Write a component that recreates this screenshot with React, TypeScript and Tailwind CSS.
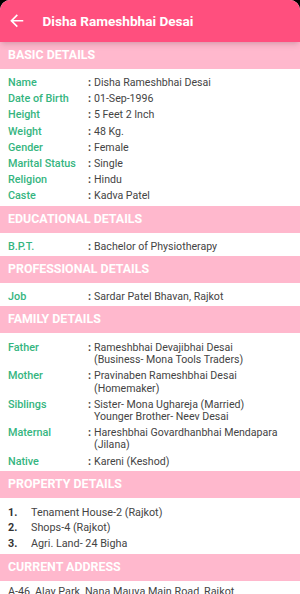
type Row = { label: string; value: string[] };

const basic: Row[] = [
  { label: "Name", value: ["Disha Rameshbhai Desai"] },
  { label: "Date of Birth", value: ["01-Sep-1996"] },
  { label: "Height", value: ["5 Feet 2 Inch"] },
  { label: "Weight", value: ["48 Kg."] },
  { label: "Gender", value: ["Female"] },
  { label: "Marital Status", value: ["Single"] },
  { label: "Religion", value: ["Hindu"] },
  { label: "Caste", value: ["Kadva Patel"] },
];

const education: Row[] = [{ label: "B.P.T.", value: ["Bachelor of Physiotherapy"] }];

const profession: Row[] = [{ label: "Job", value: ["Sardar Patel Bhavan, Rajkot"] }];

const family: Row[] = [
  { label: "Father", value: ["Rameshbhai Devajibhai Desai", "(Business- Mona Tools Traders)"] },
  { label: "Mother", value: ["Pravinaben Rameshbhai Desai", "(Homemaker)"] },
  { label: "Siblings", value: ["Sister- Mona Ughareja (Married)", "Younger Brother- Neev Desai"] },
  { label: "Maternal", value: ["Hareshbhai Govardhanbhai Mendapara", "(Jilana)"] },
  { label: "Native", value: ["Kareni (Keshod)"] },
];

const property = ["Tenament House-2 (Rajkot)", "Shops-4 (Rajkot)", "Agri. Land- 24 Bigha"];

const Band = ({ title }: { title: string }) => (
  <div className="h-[27px] shrink-0 bg-[#ffb8cd] px-2 flex items-center text-white text-[12.4px] font-bold">
    {title}
  </div>
);

const Rows = ({ rows, top = "pt-[6px]" }: { rows: Row[]; top?: string }) => (
  <div className={`${top} pb-[1px]`}>
    {rows.map((r) => (
      <div key={r.label} className="flex px-2 py-[2px] text-[10.8px] leading-[12.2px]">
        <div className="w-[80px] shrink-0 text-[#35b580] font-medium">{r.label}</div>
        <div className="w-[6px] shrink-0 text-[#444] font-bold">:</div>
        <div className="text-[#444] text-[10.6px]">
          {r.value.map((v) => (
            <div key={v}>{v}</div>
          ))}
        </div>
      </div>
    ))}
  </div>
);

export default function App() {
  return (
    <div
      className="w-[300px] h-[594px] bg-black overflow-hidden"
      style={{ fontFamily: "Roboto, 'Noto Sans', sans-serif" }}
    >
      <div className="h-full bg-white rounded-t-[10px] overflow-hidden flex flex-col">
        {/* Toolbar */}
        <div className="h-[42px] shrink-0 bg-[#ff4f7e] flex items-center pl-[7px] gap-[16px] shadow-md relative z-10">
          <svg width="19.5" height="19.5" viewBox="0 0 24 24" fill="white">
            <path d="M20 11H7.83l5.59-5.59L12 4l-8 8 8 8 1.41-1.41L7.83 13H20v-2z" />
          </svg>
          <span className="text-white text-[13.6px] font-bold">Disha Rameshbhai Desai</span>
        </div>

        <Band title="BASIC DETAILS" />
        <Rows rows={basic} />
        <Band title="EDUCATIONAL DETAILS" />
        <Rows rows={education} />
        <Band title="PROFESSIONAL DETAILS" />
        <Rows rows={profession} />
        <Band title="FAMILY DETAILS" />
        <Rows rows={family} top="pt-[7px]" />
        <Band title="PROPERTY DETAILS" />
        <div className="pt-[7px] pb-[2px]">
          {property.map((p, i) => (
            <div key={p} className="flex px-2 text-[10.8px] leading-[15.6px] text-[#444]">
              <span className="w-[23px] font-bold text-[#333]">{i + 1}.</span>
              <span>{p}</span>
            </div>
          ))}
        </div>
        <Band title="CURRENT ADDRESS" />
        <div className="px-2 pt-[4px] text-[10.8px] leading-[14px] text-[#444] whitespace-nowrap">
          A-46, Alav Park, Nana Mauva Main Road, Rajkot
        </div>
      </div>
    </div>
  );
}
